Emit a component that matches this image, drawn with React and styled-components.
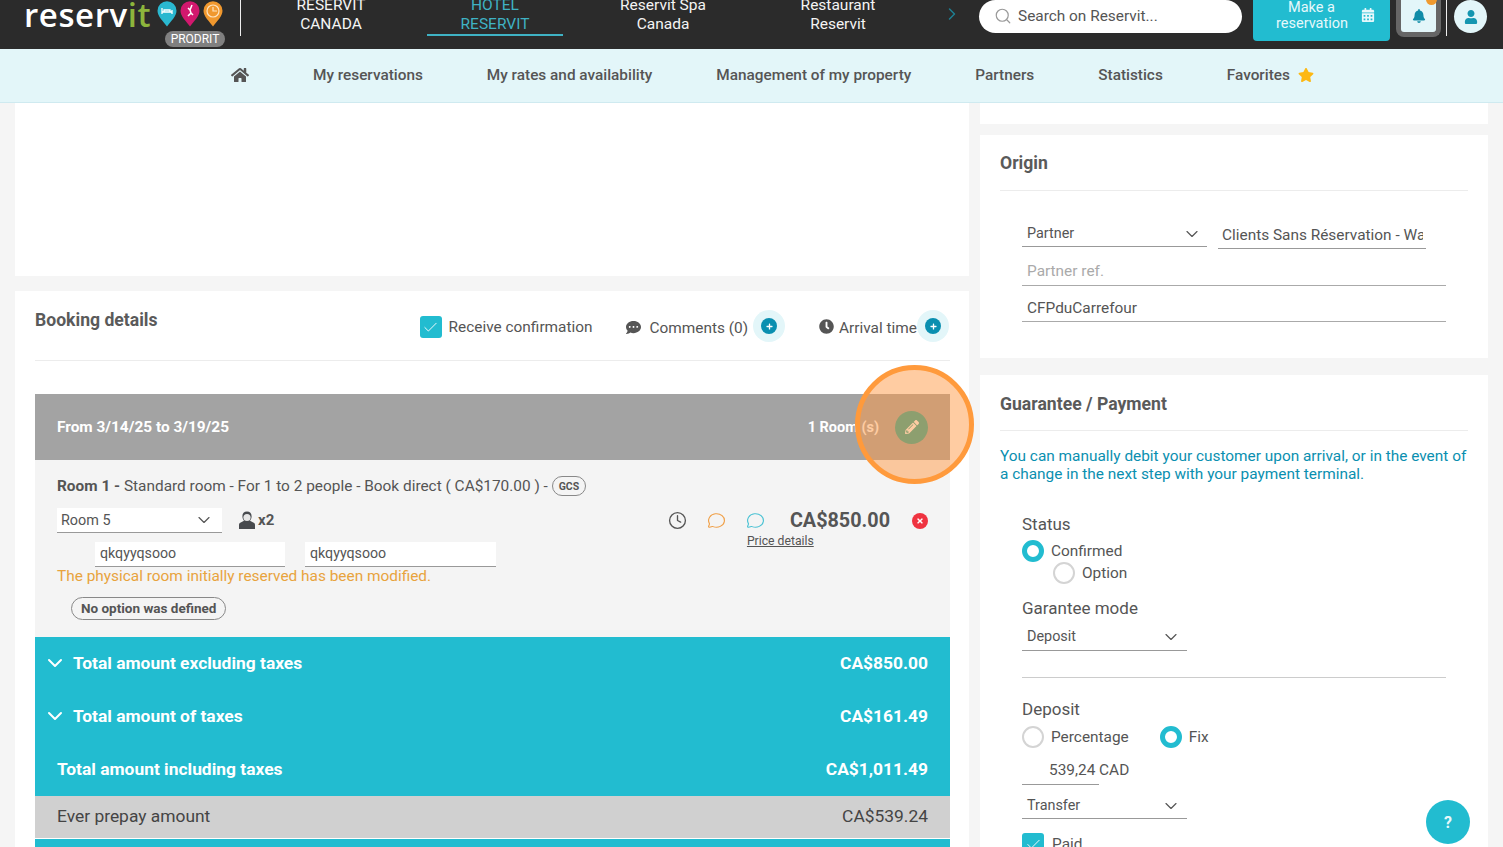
import React from 'react';
import styled, { createGlobalStyle } from 'styled-components';
import { FaHome, FaStar, FaBell, FaUser, FaCommentDots, FaClock, FaPencilAlt, FaCalendarAlt, FaTimes, FaPlus } from 'react-icons/fa';
import { Search, ChevronDown, ChevronRight, Clock, MessageCircle, Check } from 'lucide-react';

const Global = createGlobalStyle`
  html, body { margin: 0; padding: 0; height: 100%; overflow: hidden; background: #f5f5f5; }
  * { box-sizing: border-box; }
  body { font-family: Roboto, "Liberation Sans", sans-serif; color: #555; }
`;

const Page = styled.div`
  position: relative;
  width: 1503px;
  height: 847px;
  overflow: hidden;
  display: flex;
  flex-direction: column;
`;

const Header = styled.header`
  height: 49px;
  flex: none;
  background: #2b2b2b;
  display: flex;
  align-items: flex-start;
  overflow: hidden;
`;

const LogoArea = styled.div`
  width: 241px;
  height: 36px;
  flex: none;
  padding-left: 24px;
  border-right: 1px solid #eee;
  display: flex;
  position: relative;
`;

const LogoWord = styled.div`
  font-family: "Open Sans", Lato, sans-serif;
  font-weight: 600;
  font-size: 33px;
  line-height: 29px;
  color: #fff;
  letter-spacing: 0.6px;
  span { color: #8db53c; }
`;

const Pins = styled.div`
  display: flex;
  gap: 3px;
  margin-left: 6px;
  margin-top: 1px;
`;

const Badge = styled.div`
  position: absolute;
  left: 165px;
  top: 31px;
  width: 60px;
  height: 16px;
  border-radius: 8px;
  background: #808080;
  color: #fff;
  font-size: 12px;
  line-height: 16px;
  text-align: center;
`;

const TopNav = styled.nav`
  display: flex;
  margin-left: 22px;
  flex: none;
  width: 643px;
`;

const TopItem = styled.div`
  width: 136px;
  flex: none;
  height: 36px;
  margin-left: ${p => p.$gap || 0}px;
  display: flex;
  flex-direction: column;
  justify-content: flex-end;
  text-align: center;
  font-size: 15.5px;
  line-height: 19px;
  color: ${p => (p.$active ? '#3fb2c4' : '#f4f4f4')};
  border-bottom: 2px solid ${p => (p.$active ? '#3fb2c4' : 'transparent')};
  white-space: nowrap;
`;

const NavArrow = styled.div`
  width: 37px;
  margin-left: 36px;
  margin-top: 4px;
  color: #1f7f92;
  flex: none;
`;

const SearchBox = styled.div`
  width: 263px;
  height: 33px;
  flex: none;
  background: #fff;
  border-radius: 17px;
  display: flex;
  align-items: center;
  gap: 6px;
  padding-left: 15px;
  padding-bottom: 1px;
  font-size: 15.4px;
  color: #555;
  svg { color: #999; }
`;

const MakeButton = styled.div`
  margin-left: 11px;
  width: 137px;
  height: 41px;
  flex: none;
  background: #22bcd0;
  border-radius: 0 0 4px 4px;
  color: #e6f8fb;
  display: flex;
  align-items: flex-start;
  padding-left: 23px;
  gap: 14px;
  font-size: 14.5px;
  line-height: 16px;
  text-align: center;
  svg { margin-top: 8px; flex: none; }
`;

const MakeText = styled.div`
  width: 71px;
`;

const BellBox = styled.div`
  position: relative;
  margin-left: 6px;
  width: 45px;
  height: 37px;
  flex: none;
  background: #e3f6f9;
  border: 5px solid #666;
  border-top: 0;
  border-radius: 0 0 8px 8px;
  color: #0f8ca8;
  display: flex;
  align-items: center;
  justify-content: center;
`;

const BellDot = styled.span`
  position: absolute;
  right: -1px;
  top: -6px;
  width: 11px;
  height: 11px;
  border-radius: 50%;
  background: #ef9a2f;
`;

const HeadDivider = styled.div`
  width: 1px;
  height: 36px;
  flex: none;
  background: #eee;
  margin-left: 5px;
`;

const Avatar = styled.div`
  margin-left: 7px;
  width: 33px;
  height: 33px;
  flex: none;
  border-radius: 50%;
  background: #e3f6f9;
  color: #1596b0;
  display: flex;
  align-items: center;
  justify-content: center;
`;

const SubNav = styled.nav`
  height: 54px;
  flex: none;
  background: #e3f6f9;
  border-bottom: 1px solid #cfeaf0;
  display: flex;
  align-items: center;
  gap: 64px;
  padding: 0 0 2px 231px;
  font-weight: 500;
  font-size: 15.35px;
  color: #555;
`;

const SubItem = styled.div`
  display: flex;
  align-items: center;
  gap: 8px;
  white-space: nowrap;
`;

const Content = styled.main`
  flex: 1;
  display: grid;
  grid-template-columns: 954px 508px;
  column-gap: 11px;
  padding: 0 15px;
  min-height: 0;
`;

const Column = styled.div`
  display: flex;
  flex-direction: column;
  min-height: 0;
`;

const Card = styled.section`
  background: #fff;
  flex: none;
  height: ${p => (p.$h ? `${p.$h}px` : 'auto')};
  margin-bottom: ${p => p.$mb || 0}px;
  padding: ${p => (p.$pad ? `0 ${p.$pr || 20}px 0 20px` : '0')};
`;

const BookingHead = styled.div`
  height: 70px;
  display: flex;
  align-items: flex-start;
  justify-content: space-between;
  border-bottom: 1px solid #ececec;
`;

const CardTitle = styled.h2`
  margin: ${p => p.$mt || 0}px 0 0;
  font-size: 17.6px;
  line-height: 22px;
  font-weight: 700;
  color: #5a5a5a;
`;

const HeadActions = styled.div`
  display: flex;
  align-items: center;
  height: 32px;
  margin-top: 19px;
  margin-right: 1px;
  font-size: 15.4px;
`;

const CheckBox = styled.span`
  width: 22px;
  height: 22px;
  flex: none;
  background: #22bcd0;
  border-radius: 3px;
  color: #fff;
  margin-top: ${p => p.$mt || 0}px;
  display: inline-flex;
  align-items: center;
  justify-content: center;
`;

const ActionLabel = styled.span`
  margin-left: ${p => p.$ml || 0}px;
  margin-top: ${p => p.$mt || 0}px;
  white-space: nowrap;
  color: #555;
  display: inline-flex;
`;

const PlusHalo = styled.span`
  width: 32px;
  height: 32px;
  flex: none;
  border-radius: 50%;
  background: #e3f6f9;
  display: flex;
  align-items: center;
  justify-content: center;
  margin-left: ${p => p.$ml || 0}px;
`;

const PlusDot = styled.span`
  width: 16px;
  height: 16px;
  border-radius: 50%;
  background: #0a8fb0;
  color: #fff;
  display: flex;
  align-items: center;
  justify-content: center;
`;

const DateBar = styled.div`
  margin-top: 33px;
  height: 66px;
  background: #a3a3a3;
  color: #fff;
  font-weight: 700;
  font-size: 15.4px;
  display: flex;
  align-items: center;
  justify-content: space-between;
  padding: 0 22px;
`;

const BarRight = styled.div`
  display: flex;
  align-items: center;
  gap: 16px;
  font-size: 14.5px;
`;

const EditDot = styled.span`
  width: 33px;
  height: 33px;
  border-radius: 50%;
  background: #1ba598;
  color: #fff;
  display: flex;
  align-items: center;
  justify-content: center;
`;

const RoomBlock = styled.div`
  height: 177px;
  background: #f4f4f4;
  padding: 16px 22px 0;
  font-size: 15.4px;
  color: #555;
`;

const RoomTitle = styled.div`
  display: flex;
  align-items: center;
  height: 20px;
  white-space: pre;
  b { font-weight: 700; }
`;

const TagChip = styled.span`
  margin-left: 4px;
  height: 20px;
  width: 34px;
  border: 1px solid #888;
  border-radius: 10px;
  font-size: 10.5px;
  font-weight: 700;
  display: flex;
  align-items: center;
  justify-content: center;
`;

const RoomBody = styled.div`
  display: flex;
  justify-content: space-between;
  margin-top: 12px;
`;

const RoomLeft = styled.div`
  display: flex;
  flex-direction: column;
`;

const RoomSelectRow = styled.div`
  display: flex;
  align-items: center;
`;

const Select = styled.div`
  width: ${p => p.$w}px;
  height: ${p => p.$h || 25}px;
  margin-top: ${p => p.$mt || 0}px;
  background: ${p => p.$bg || 'transparent'};
  border-bottom: 1px solid #999;
  padding: ${p => p.$pt || 0}px ${p => p.$pr || 5}px 0 ${p => p.$pl || 5}px;
  display: flex;
  align-items: center;
  justify-content: space-between;
  font-size: 14.4px;
  color: #555;
  svg { color: #555; flex: none; }
`;

const Guests = styled.div`
  display: flex;
  align-items: center;
  gap: 3px;
  margin: -1px 0 0 17px;
  font-weight: 700;
  font-size: 15px;
`;

const NameRow = styled.div`
  display: flex;
  gap: 20px;
  margin: 9px 0 0 38px;
`;

const NameInput = styled.div`
  width: ${p => p.$w}px;
  height: 25px;
  background: #fff;
  border-bottom: 1px solid #999;
  padding: 0 5px;
  line-height: 23px;
  font-size: 14.2px;
`;

const Warning = styled.div`
  color: #e8a33d;
  font-size: 15.4px;
  line-height: 18px;
`;

const OptionChip = styled.div`
  align-self: flex-start;
  margin: 12px 0 0 14px;
  height: 23px;
  border: 1px solid #888;
  border-radius: 12px;
  padding: 0 9px;
  font-size: 13.5px;
  font-weight: 700;
  line-height: 21px;
  white-space: nowrap;
`;

const RoomRight = styled.div`
  display: flex;
  align-items: flex-start;
`;

const PriceCol = styled.div`
  display: flex;
  flex-direction: column;
`;

const PriceRow = styled.div`
  display: flex;
  align-items: center;
  height: 24px;
`;

const IconSlot = styled.span`
  display: flex;
  color: ${p => p.$c || '#555'};
  margin-right: ${p => p.$mr}px;
  svg.bubble { transform: scaleY(0.85); }
`;

const Price = styled.span`
  font-size: 19.8px;
  font-weight: 700;
  color: #555;
  white-space: nowrap;
`;

const PriceLink = styled.a`
  font-size: 12.2px;
  line-height: 14px;
  text-decoration: underline;
  color: #555;
  margin: 2px 0 0 79px;
`;

const RemoveDot = styled.span`
  width: 16px;
  height: 16px;
  border-radius: 50%;
  background: #ef3340;
  color: #fff;
  display: flex;
  align-items: center;
  justify-content: center;
  margin: 5px 0 0 22px;
`;

const TealRow = styled.div`
  height: 53px;
  background: #22bcd0;
  color: #fff;
  font-weight: 700;
  font-size: 17.4px;
  display: flex;
  align-items: center;
  justify-content: space-between;
  padding: 0 22px 2px ${p => (p.$chev ? 8 : 22)}px;
`;

const RowLabel = styled.span`
  display: flex;
  align-items: center;
  gap: 6px;
`;

const GreyRow = styled.div`
  height: 42px;
  background: #d0d0d0;
  color: #444;
  font-size: 17.4px;
  display: flex;
  align-items: center;
  justify-content: space-between;
  padding: 0 22px 2px;
`;

const TealRest = styled.div`
  margin-top: 1px;
  height: 30px;
  background: #22bcd0;
`;

const SideHead = styled.div`
  height: ${p => p.$h}px;
  padding-top: ${p => p.$pt}px;
  border-bottom: 1px solid #ececec;
`;

const OriginBody = styled.div`
  padding: 0 22px;
  margin-top: 30px;
`;

const OriginRow = styled.div`
  display: flex;
  gap: 11px;
  align-items: flex-start;
`;

const ClippedInput = styled.div`
  width: 208px;
  height: 28px;
  border-bottom: 1px solid #999;
  padding: 5px 3px 0 4px;
  font-size: 15.4px;
`;

const ClippedText = styled.div`
  overflow: hidden;
  white-space: nowrap;
`;

const FullInput = styled.div`
  height: ${p => p.$h || 37}px;
  border-bottom: 1px solid #aaa;
  padding: 0 5px ${p => p.$pb || 5}px;
  display: flex;
  align-items: flex-end;
  font-size: 15.4px;
  color: ${p => (p.$muted ? '#aaa' : '#555')};
`;

const Notice = styled.p`
  margin: 16px 0 0;
  color: #0a8fb0;
  font-size: 15.4px;
  line-height: 18px;
`;

const PayBody = styled.div`
  padding: 0 22px;
`;

const FieldLabel = styled.div`
  font-size: 17px;
  line-height: 20px;
  color: #555;
  margin-top: ${p => p.$mt || 0}px;
`;

const RadioLine = styled.div`
  display: flex;
  align-items: center;
  height: 22px;
  font-size: 15.4px;
  margin-left: ${p => p.$ml || 0}px;
  margin-top: ${p => p.$mt || 0}px;
`;

const Radio = styled.span`
  width: 22px;
  height: 22px;
  flex: none;
  border-radius: 50%;
  background: #fff;
  border: ${p => (p.$on ? '5px solid #22bcd0' : '2px solid #d4d4d4')};
  margin-right: 7px;
`;

const RadioGap = styled.span`
  width: 31px;
  flex: none;
`;

const Rule = styled.div`
  height: 1px;
  background: #ccc;
  margin-top: 26px;
`;

const AmountInput = styled.div`
  width: 77px;
  height: 27px;
  border-bottom: 1px solid #999;
  margin-top: 10px;
  padding-left: 27px;
  font-size: 15.4px;
  line-height: 24px;
  white-space: nowrap;
`;

const PaidRow = styled.div`
  display: flex;
  align-items: center;
  gap: 8px;
  margin-top: 14px;
  font-size: 15.4px;
`;

const HelpButton = styled.div`
  position: absolute;
  left: 1426px;
  top: 800px;
  width: 44px;
  height: 44px;
  border-radius: 50%;
  background: #22bcd0;
  color: #e8f8fa;
  font-weight: 700;
  font-size: 16px;
  display: flex;
  align-items: center;
  justify-content: center;
`;

const Spotlight = styled.div`
  position: absolute;
  left: 855px;
  top: 365px;
  width: 119px;
  height: 119px;
  border-radius: 50%;
  border: 5px solid #ff9a3c;
  background: rgba(255, 154, 70, 0.5);
  pointer-events: none;
`;

const Pin = ({ fill, children }) => (
  <svg width="20" height="26" viewBox="0 0 20 26">
    <path d="M10 25.5C6 20 .5 15.5.5 9.8A9.5 9.5 0 0 1 19.5 9.8C19.5 15.5 14 20 10 25.5Z" fill={fill} />
    {children}
  </svg>
);

const MaskedGuest = () => (
  <svg width="16" height="18" viewBox="0 0 16 18">
    <path d="M8 .5c3 0 4.6 2 4.6 4.8 0 1.800-.6 3.400-1.600 4.400l4.200 2.400c.5.3.8 1 .8 1.600V18H0v-4.300c0-.6.3-1.300.8-1.600L5 9.700C4 8.700 3.400 7.100 3.400 5.300 3.400 2.500 5 .5 8 .5Z" fill="#474a4e" />
    <ellipse cx="8" cy="6.400" rx="3.600" ry="3.500" fill="#e6e6e6" />
  </svg>
);

export default function App() {
  return (
    <Page>
      <Global />
      <Header>
        <LogoArea>
          <LogoWord>reserv<span>it</span></LogoWord>
          <Pins>
            <Pin fill="#2ab8d0"><path d="M5 7v6M15 9v4M5 11h10M7 9h6v2H7z" stroke="#fff" strokeWidth="1.300" fill="none" /></Pin>
            <Pin fill="#d2186e"><path d="M12 4l-2 5-2-2M10 9l1 3-3 3M11 12l2 2" stroke="#fff" strokeWidth="1.500" fill="none" /></Pin>
            <Pin fill="#f0982e"><circle cx="10" cy="10" r="6" stroke="#fde3c0" strokeWidth="1.200" fill="none" /><path d="M10 6v4h4" stroke="#fde3c0" strokeWidth="1.200" fill="none" /></Pin>
          </Pins>
          <Badge>PRODRIT</Badge>
        </LogoArea>
        <TopNav>
          <TopItem>RESERVIT<br />CANADA</TopItem>
          <TopItem $gap={28} $active>HOTEL<br />RESERVIT</TopItem>
          <TopItem $gap={32}>Reservit Spa<br />Canada</TopItem>
          <TopItem $gap={39}>Restaurant<br />Reservit</TopItem>
        </TopNav>
        <NavArrow><ChevronRight size={20} strokeWidth={1.800} /></NavArrow>
        <SearchBox><Search size={18} strokeWidth={1.600} />Search on Reservit...</SearchBox>
        <MakeButton>
          <MakeText>Make a reservation</MakeText>
          <FaCalendarAlt size={14} />
        </MakeButton>
        <BellBox><FaBell size={14} /><BellDot /></BellBox>
        <HeadDivider />
        <Avatar><FaUser size={14} /></Avatar>
      </Header>
      <SubNav>
        <SubItem><FaHome size={18} color="#555" /></SubItem>
        <SubItem>My reservations</SubItem>
        <SubItem>My rates and availability</SubItem>
        <SubItem>Management of my property</SubItem>
        <SubItem>Partners</SubItem>
        <SubItem>Statistics</SubItem>
        <SubItem>Favorites <FaStar size={16} color="#fdb813" /></SubItem>
      </SubNav>
      <Content>
        <Column>
          <Card $h={173} $mb={15} />
          <Card $pad $pr={19}>
            <BookingHead>
              <CardTitle $mt={18}>Booking details</CardTitle>
              <HeadActions>
                <CheckBox $mt={2}><Check size={17} strokeWidth={1.300} /></CheckBox>
                <ActionLabel $ml={7} $mt={1}>Receive confirmation</ActionLabel>
                <ActionLabel $ml={33} $mt={3}><FaCommentDots size={15} /></ActionLabel>
                <ActionLabel $ml={9} $mt={3}>Comments (0)</ActionLabel>
                <PlusHalo $ml={5}><PlusDot><FaPlus size={7} /></PlusDot></PlusHalo>
                <ActionLabel $ml={34} $mt={0}><FaClock size={15} /></ActionLabel>
                <ActionLabel $ml={5} $mt={3}>Arrival time</ActionLabel>
                <PlusHalo><PlusDot><FaPlus size={7} /></PlusDot></PlusHalo>
              </HeadActions>
            </BookingHead>
            <DateBar>
              <span>From 3/14/25 to 3/19/25</span>
              <BarRight>
                <span>1 Room (s)</span>
                <EditDot><FaPencilAlt size={14} /></EditDot>
              </BarRight>
            </DateBar>
            <RoomBlock>
              <RoomTitle>
                <b>Room 1 - </b>Standard room - For 1 to 2 people - Book direct ( CA$170.00 ) -
                <TagChip>GCS</TagChip>
              </RoomTitle>
              <RoomBody>
                <RoomLeft>
                  <RoomSelectRow>
                    <Select $w={165} $bg="#fff" $pr={8} $pl={4}>Room 5<ChevronDown size={20} strokeWidth={1.400} /></Select>
                    <Guests><MaskedGuest />x2</Guests>
                  </RoomSelectRow>
                  <NameRow>
                    <NameInput $w={190}>qkqyyqsooo</NameInput>
                    <NameInput $w={191}>qkqyyqsooo</NameInput>
                  </NameRow>
                  <Warning>The physical room initially reserved has been modified.</Warning>
                  <OptionChip>No option was defined</OptionChip>
                </RoomLeft>
                <RoomRight>
                  <PriceCol>
                    <PriceRow>
                      <IconSlot $mr={20}><Clock size={19} strokeWidth={1.700} /></IconSlot>
                      <IconSlot $c="#f0a14a" $mr={20}><MessageCircle className="bubble" size={19} strokeWidth={1.500} /></IconSlot>
                      <IconSlot $c="#4dc3d4" $mr={25}><MessageCircle className="bubble" size={19} strokeWidth={1.500} /></IconSlot>
                      <Price>CA$850.00</Price>
                    </PriceRow>
                    <PriceLink>Price details</PriceLink>
                  </PriceCol>
                  <RemoveDot><FaTimes size={8} /></RemoveDot>
                </RoomRight>
              </RoomBody>
            </RoomBlock>
            <TealRow $chev>
              <RowLabel><ChevronDown size={24} strokeWidth={2} />Total amount excluding taxes</RowLabel>
              <span>CA$850.00</span>
            </TealRow>
            <TealRow $chev>
              <RowLabel><ChevronDown size={24} strokeWidth={2} />Total amount of taxes</RowLabel>
              <span>CA$161.49</span>
            </TealRow>
            <TealRow>
              <RowLabel>Total amount including taxes</RowLabel>
              <span>CA$1,011.49</span>
            </TealRow>
            <GreyRow><span>Ever prepay amount</span><span>CA$539.24</span></GreyRow>
            <TealRest />
          </Card>
        </Column>
        <Column>
          <Card $h={21} $mb={11} />
          <Card $h={223} $mb={17} $pad>
            <SideHead $h={56} $pt={17}><CardTitle>Origin</CardTitle></SideHead>
            <OriginBody>
              <OriginRow>
                <Select $w={185} $h={26} $pr={5}>Partner<ChevronDown size={20} strokeWidth={1.400} /></Select>
                <ClippedInput><ClippedText>Clients Sans Réservation - Walk in</ClippedText></ClippedInput>
              </OriginRow>
              <FullInput $muted $h={37}>Partner ref.</FullInput>
              <FullInput $h={36} $pb={4}>CFPduCarrefour</FullInput>
            </OriginBody>
          </Card>
          <Card $pad>
            <SideHead $h={56} $pt={18}><CardTitle>Guarantee / Payment</CardTitle></SideHead>
            <Notice>You can manually debit your customer upon arrival, or in the event of a change in the next step with your payment terminal.</Notice>
            <PayBody>
              <FieldLabel $mt={31}>Status</FieldLabel>
              <RadioLine $mt={6}><Radio $on />Confirmed</RadioLine>
              <RadioLine $ml={31}><Radio />Option</RadioLine>
              <FieldLabel $mt={14}>Garantee mode</FieldLabel>
              <Select $w={165} $h={28} $mt={5} $pr={6}>Deposit<ChevronDown size={20} strokeWidth={1.400} /></Select>
              <Rule />
              <FieldLabel $mt={21}>Deposit</FieldLabel>
              <RadioLine $mt={7}><Radio />Percentage<RadioGap /><Radio $on />Fix</RadioLine>
              <AmountInput>539,24 CAD</AmountInput>
              <Select $w={165} $h={34} $pt={8} $pr={6}>Transfer<ChevronDown size={20} strokeWidth={1.400} /></Select>
              <PaidRow><CheckBox><Check size={17} strokeWidth={1.300} /></CheckBox>Paid</PaidRow>
            </PayBody>
          </Card>
        </Column>
      </Content>
      <Spotlight />
      <HelpButton>?</HelpButton>
    </Page>
  );
}
